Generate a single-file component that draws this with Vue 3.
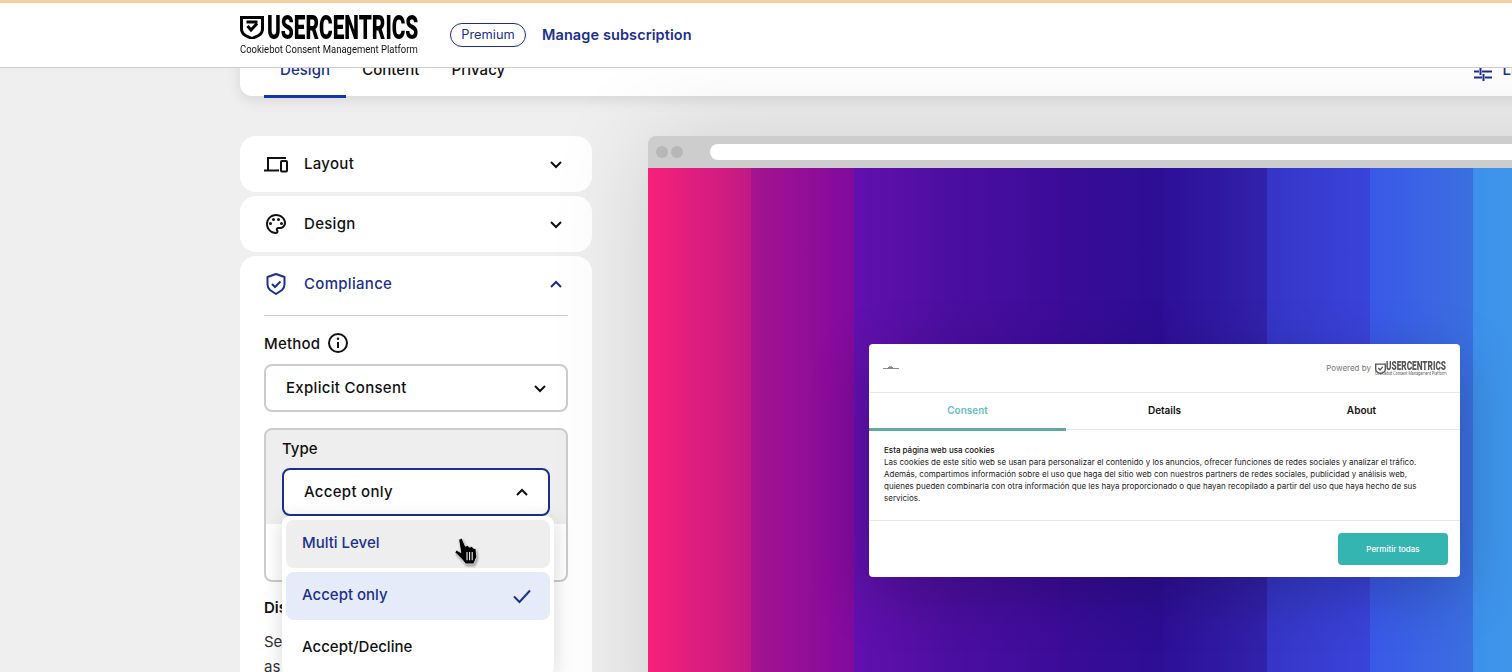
<script setup>
const stripes = [
  ['#f8207a', '#c01a84'],
  ['#a5138f', '#800a9e'],
  ['#6210ae', '#4a0e9f'],
  ['#4a0ea0', '#3c0c99'],
  ['#3a0c98', '#2c0e94'],
  ['#2e0f98', '#3122ab'],
  ['#3535c6', '#3a44da'],
  ['#3a58e8', '#3a70e0'],
  ['#3d90ea', '#40a0ea'],
  ['#40a0ea', '#40a8ea']
]
const bodyLines = [
  'Las cookies de este sitio web se usan para personalizar el contenido y los anuncios, ofrecer funciones de redes sociales y analizar el tráfico.',
  'Además, compartimos información sobre el uso que haga del sitio web con nuestros partners de redes sociales, publicidad y análisis web,',
  'quienes pueden combinarla con otra información que les haya proporcionado o que hayan recopilado a partir del uso que haya hecho de sus',
  'servicios.'
]
</script>

<template>
  <div class="page">
    <header class="topbar">
      <div class="brand">
        <svg class="shield" viewBox="0 0 24 24" width="24" height="24">
          <path d="M1.500 2.500h21v11.500q0 4-4 6.500l-6.500 3-6.500-3q-4-2.500-4-6.500z" fill="none" stroke="#000" stroke-width="3" />
          <path d="M6.500 5.500h11v3h-11z" fill="#000" />
          <path d="M7.500 11l3.500 4 6-6.500" fill="none" stroke="#000" stroke-width="3" />
        </svg>
        <div class="brand-texts">
          <div class="brand-name"><span>USERCENTRICS</span></div>
          <div class="brand-sub"><span>Cookiebot Consent Management Platform</span></div>
        </div>
      </div>
      <span class="pill">Premium</span>
      <a class="manage">Manage subscription</a>
    </header>

    <div class="content">
      <nav class="tabs-card">
        <span class="tab active">Design</span>
        <span class="tab">Content</span>
        <span class="tab">Privacy</span>
        <div class="tabs-right">
          <svg width="18" height="14" viewBox="0 0 18 14">
            <path d="M0 4.500h5M8 4.500h10M0 10.500h8M11 10.500h7M6.500 1v7M9.500 7v7" stroke="#1c2f8f" stroke-width="2" fill="none" />
          </svg>
          <span class="live">Live</span>
        </div>
      </nav>

      <main class="main">
        <aside class="side">
          <section class="card">
            <div class="acc-head">
              <svg class="ic" viewBox="0 0 24 24" width="24" height="24">
                <path d="M4 18V6h18M0 18.500h15" fill="none" stroke="#111" stroke-width="2" />
                <rect x="17" y="9" width="6" height="10.500" rx="1" fill="none" stroke="#111" stroke-width="2" />
              </svg>
              <span class="acc-title">Layout</span>
              <svg class="chev" viewBox="0 0 24 24" width="24" height="24"><path d="M7 10l5 5 5-5" fill="none" stroke="#111" stroke-width="2" /></svg>
            </div>
          </section>

          <section class="card">
            <div class="acc-head">
              <svg class="ic" viewBox="0 0 24 24" width="24" height="24">
                <path fill="#111" d="M12 22C6.490 22 2 17.510 2 12S6.490 2 12 2s10 4.040 10 9c0 3.310-2.690 6-6 6h-1.770c-.28 0-.5.22-.5.5 0 .12.05.23.13.33.41.47.64 1.060.64 1.670 0 1.380-1.120 2.500-2.500 2.500zm0-18c-4.410 0-8 3.590-8 8s3.590 8 8 8c.28 0 .5-.22.5-.5 0-.16-.08-.28-.14-.35-.41-.46-.63-1.050-.63-1.650 0-1.380 1.120-2.500 2.500-2.500H16c2.210 0 4-1.790 4-4 0-3.860-3.590-7-8-7z" />
                <circle cx="6.500" cy="11.500" r="1.500" fill="#111" />
                <circle cx="9.500" cy="7.500" r="1.500" fill="#111" />
                <circle cx="14.500" cy="7.500" r="1.500" fill="#111" />
                <circle cx="17.500" cy="11.500" r="1.500" fill="#111" />
              </svg>
              <span class="acc-title">Design</span>
              <svg class="chev" viewBox="0 0 24 24" width="24" height="24"><path d="M7 10l5 5 5-5" fill="none" stroke="#111" stroke-width="2" /></svg>
            </div>
          </section>

          <section class="card grow">
            <div class="acc-head navy">
              <svg class="ic" viewBox="0 0 24 24" width="24" height="24">
                <path d="M12 2l8.500 3v7.500q0 3-2.500 5.500l-6 4-6-4q-2.500-2.500-2.500-5.500V5z" fill="none" stroke="#1c2f8f" stroke-width="2" stroke-linejoin="round" />
                <path d="M8 12l3 3 5.500-5.500" fill="none" stroke="#1c2f8f" stroke-width="2" />
              </svg>
              <span class="acc-title">Compliance</span>
              <svg class="chev" viewBox="0 0 24 24" width="24" height="24"><path d="M7 15l5-5 5 5" fill="none" stroke="#1c2f8f" stroke-width="2" /></svg>
            </div>

            <div class="acc-body">
              <div class="method-label">
                <span>Method</span>
                <svg viewBox="0 0 22 22" width="22" height="22">
                  <circle cx="11" cy="11" r="9" fill="none" stroke="#111" stroke-width="2" />
                  <path d="M11 10v6" stroke="#111" stroke-width="2" />
                  <circle cx="11" cy="6.800" r="1.200" fill="#111" />
                </svg>
              </div>
              <div class="select">
                <span>Explicit Consent</span>
                <svg viewBox="0 0 24 24" width="24" height="24"><path d="M7 10l5 5 5-5" fill="none" stroke="#111" stroke-width="2" /></svg>
              </div>

              <div class="type-box">
                <div class="type-label">Type</div>
                <div class="select open">
                  <span>Accept only</span>
                  <svg viewBox="0 0 24 24" width="24" height="24"><path d="M7 15l5-5 5 5" fill="none" stroke="#111" stroke-width="2" /></svg>
                </div>
                <div class="menu">
                  <div class="opt hover"><span>Multi Level</span></div>
                  <div class="opt sel">
                    <span>Accept only</span>
                    <svg viewBox="0 0 24 24" width="24" height="24"><path d="M4 12.500l5.500 5.500L20 6.500" fill="none" stroke="#1c2f8f" stroke-width="2" /></svg>
                  </div>
                  <div class="opt"><span>Accept/Decline</span></div>
                </div>
                <svg class="cursor" viewBox="0 0 24 28" width="25" height="29">
                  <path d="M4.500 2.500L7.500 1l3.500 8 2-1 2 2 2-1 2 2 2 0 1 8-3 7h-8l-3-4-7-7 1-2.500 4.500 2.500z" fill="#000" stroke="#fff" stroke-width=".7" />
                  <path d="M12.500 14.500v8M15 14.500v8M17.500 14.500v8" stroke="#fff" stroke-width="1" />
                </svg>
              </div>

              <div class="dis">Display</div>
              <p class="desc">Select<br />as</p>
            </div>
          </section>
        </aside>

        <section class="preview">
          <div class="chrome">
            <i class="dot"></i>
            <i class="dot"></i>
            <div class="url"></div>
          </div>
          <div class="stage">
            <div v-for="(s, i) in stripes" :key="i" class="stripe" :style="{ background: `linear-gradient(90deg, ${s[0]}, ${s[1]})` }"></div>

            <div class="modal">
              <div class="m-head">
                <svg width="16" height="4" viewBox="0 0 16 4">
                  <path d="M0 2.500h16M5 1.500h5M6 .8h3" stroke="#8a8a8a" stroke-width="1" />
                </svg>
                <div class="m-powered">
                  <span class="m-by">Powered by</span>
                  <svg viewBox="0 0 24 24" width="11" height="11">
                    <path d="M1.500 2.500h21v11.500q0 4-4 6.500l-6.500 3-6.500-3q-4-2.500-4-6.500z" fill="none" stroke="#555" stroke-width="3" />
                    <path d="M7.500 11l3.500 4 6-6.500" fill="none" stroke="#555" stroke-width="3" />
                  </svg>
                  <div class="m-logo">
                    <div class="m-name"><span>USERCENTRICS</span></div>
                    <div class="m-sub"><span>Cookiebot Consent Management Platform</span></div>
                  </div>
                </div>
              </div>
              <div class="m-tabs">
                <span class="m-tab on">Consent</span>
                <span class="m-tab">Details</span>
                <span class="m-tab">About</span>
              </div>
              <div class="m-body">
                <div class="m-title">Esta página web usa cookies</div>
                <div v-for="l in bodyLines" :key="l">{{ l }}</div>
              </div>
              <div class="m-foot">
                <button class="m-btn">Permitir todas</button>
              </div>
            </div>
          </div>
        </section>
      </main>
    </div>
  </div>
</template>

<style scoped>
.page {
  position: relative;
  height: 672px;
  overflow: hidden;
  background: #efefef;
  font-family: Inter, "Liberation Sans", sans-serif;
  color: #111;
}
.topbar {
  position: absolute;
  top: 0;
  left: 0;
  right: 0;
  height: 68px;
  box-sizing: border-box;
  z-index: 10;
  background: #fff;
  border-top: 3px solid #f7cf9f;
  border-bottom: 1px solid #ccc;
  padding-left: 240px;
  display: flex;
  align-items: center;
}
.brand {
  width: 179px;
  position: relative;
  height: 40px;
  margin-top: -3px;
  display: flex;
  flex: none;
}
.shield {
  flex: none;
  margin-top: 1px;
}
.brand-texts {
  position: absolute;
  inset: 0;
}
.brand-name {
  margin-left: 27px;
  height: 26px;
  font: 900 34px/27px Roboto, sans-serif;
  color: #000;
  white-space: nowrap;
}
.brand-name span {
  display: inline-block;
  transform-origin: 0 50%;
  transform: scaleX(0.612);
}
.brand-sub {
  margin-top: 4px;
  font: 400 11px/12px Roboto, sans-serif;
  color: #111;
  white-space: nowrap;
}
.brand-sub span {
  display: inline-block;
  transform-origin: 0 50%;
  transform: scaleX(0.862);
}
.pill {
  margin-left: 31px;
  height: 24px;
  box-sizing: border-box;
  width: 76px;
  border: 1.5px solid #1c2f8f;
  border-radius: 12px;
  color: #1c2f8f;
  font-size: 12.800px;
  line-height: 21px;
  text-align: center;
}
.manage {
  margin-left: 16px;
  margin-top: -2px;
  color: #1c2f8f;
  font-size: 14.500px;
  font-weight: 600;
  letter-spacing: 0.1px;
}
.content {
  padding-left: 240px;
}
.tabs-card {
  margin-top: 36px;
  width: 1300px;
  height: 60px;
  background: #fff;
  border-radius: 0 0 12px 12px;
  box-shadow: 0 4px 14px rgba(0, 0, 0, 0.1);
  padding-left: 24px;
  display: flex;
  box-sizing: border-box;
}
.tab {
  height: 62px;
  box-sizing: border-box;
  padding: 25px 16px 0;
  font-size: 15px;
  font-weight: 500;
  line-height: 18px;
  letter-spacing: 0.05px;
  border-bottom: 3px solid transparent;
}
.tab.active {
  color: #1c2f8f;
  border-bottom-color: #1433b0;
}
.tabs-right {
  margin-left: auto;
  padding: 31px 8px 0 0;
  display: flex;
  gap: 11px;
  color: #1c2f8f;
  font-size: 15px;
  font-weight: 500;
}
.live {
  margin-top: -7px;
}
.main {
  margin-top: 40px;
  display: flex;
  gap: 56px;
  align-items: flex-start;
}
.side {
  width: 352px;
  flex: none;
  display: flex;
  flex-direction: column;
  gap: 4px;
}
.card {
  background: #fff;
  border-radius: 16px;
}
.card.grow {
  height: 600px;
}
.acc-head {
  height: 56px;
  padding: 0 24px;
  display: flex;
  align-items: center;
  gap: 16px;
}
.acc-head.navy {
  color: #1c2f8f;
}
.acc-title {
  flex: 1;
  margin-top: -2px;
  font-size: 15px;
  font-weight: 500;
  letter-spacing: 0.3px;
}
.acc-body {
  margin: 3px 24px 0;
  border-top: 1px solid #ccc;
  padding-top: 16px;
}
.method-label {
  display: flex;
  align-items: center;
  gap: 7px;
  height: 22px;
  font-size: 15px;
  font-weight: 500;
  letter-spacing: 0.2px;
}
.select {
  margin-top: 10px;
  height: 48px;
  box-sizing: border-box;
  background: #fff;
  border: 2px solid #ccc;
  border-radius: 8px;
  padding: 0 14px 0 20px;
  display: flex;
  align-items: center;
  justify-content: space-between;
  font-size: 15px;
  font-weight: 500;
  letter-spacing: 0.3px;
}
.select span {
  margin-top: -2px;
}
.type-box {
  position: relative;
  margin-top: 16px;
  height: 154px;
  box-sizing: border-box;
  border: 2px solid #ccc;
  border-radius: 8px;
  padding: 0 16px;
  background: linear-gradient(#eee 0, #eee 94px, #fff 94px);
}
.type-label {
  margin-top: 9px;
  font-size: 15px;
  font-weight: 500;
  line-height: 20px;
}
.select.open {
  margin-top: 9px;
  border-color: #1c2f8f;
}
.menu {
  position: absolute;
  left: 16px;
  top: 86px;
  width: 272px;
  box-sizing: border-box;
  z-index: 5;
  background: #fff;
  border-radius: 8px;
  padding: 4px;
  display: flex;
  flex-direction: column;
  gap: 4px;
  box-shadow: 0 4px 20px rgba(0, 0, 0, 0.16);
}
.opt {
  height: 48px;
  box-sizing: border-box;
  border-radius: 8px;
  padding: 0 16px;
  display: flex;
  align-items: center;
  justify-content: space-between;
  font-size: 15px;
  font-weight: 500;
}
.opt span {
  margin-top: -4px;
}
.opt.hover {
  background: #eee;
  color: #1c2f8f;
}
.opt.sel {
  background: #e6ebfa;
  color: #1c2f8f;
}
.cursor {
  position: absolute;
  left: 188px;
  top: 107px;
  z-index: 6;
  filter: drop-shadow(1px 2px 1px rgba(0, 0, 0, 0.35));
}
.dis {
  margin-top: 16px;
  font-size: 15px;
  font-weight: 600;
  line-height: 20px;
}
.desc {
  margin: 11px 0 0;
  font-size: 15px;
  line-height: 25px;
  color: #333;
}
.preview {
  position: relative;
  z-index: 1;
  flex: none;
  width: 1033px;
  height: 640px;
  border-radius: 8px 8px 0 0;
  box-shadow: 0 0 100px rgba(0, 0, 0, 0.13);
}
.chrome {
  height: 32px;
  background: #cdcdcd;
  border-radius: 8px 8px 0 0;
  display: flex;
  align-items: center;
  padding-left: 8px;
  gap: 3px;
}
.dot {
  width: 12px;
  height: 12px;
  border-radius: 50%;
  background: #b7b7b7;
}
.url {
  margin-left: 24px;
  flex: 1;
  height: 16px;
  background: #fff;
  border-radius: 8px 0 0 8px;
}
.stage {
  position: relative;
  height: 608px;
  display: flex;
  overflow: hidden;
  box-shadow: inset 0 1px 2px rgba(0, 0, 0, 0.3);
}
.stripe {
  width: 103.100px;
  flex: none;
}
.modal {
  position: absolute;
  left: 221px;
  top: 176px;
  width: 591px;
  height: 233px;
  background: #fff;
  border-radius: 4px;
  box-shadow: 0 16px 60px rgba(0, 0, 0, 0.22);
  display: flex;
  flex-direction: column;
}
.m-head {
  height: 48px;
  flex: none;
  padding: 0 14px;
  display: flex;
  align-items: center;
  justify-content: space-between;
  border-bottom: 1px solid #e8e8e8;
}
.m-powered {
  display: flex;
  align-items: center;
}
.m-by {
  font-size: 8px;
  color: #777;
  margin-right: 4px;
}
.m-logo {
  width: 60px;
  margin-top: 1px;
}
.m-name {
  height: 10px;
  font: 900 12.500px/10px Roboto, sans-serif;
  color: #555;
  white-space: nowrap;
}
.m-name span {
  display: inline-block;
  transform-origin: 0 50%;
  transform: scaleX(0.66);
}
.m-sub {
  height: 5px;
  font: 400 4.500px/5px Roboto, sans-serif;
  color: #666;
  white-space: nowrap;
  margin-left: -11px;
}
.m-sub span {
  display: inline-block;
  transform-origin: 0 50%;
  transform: scaleX(0.85);
}
.m-tabs {
  height: 36px;
  flex: none;
  display: flex;
  border-bottom: 1px solid #e8e8e8;
}
.m-tab {
  flex: 1;
  height: 38px;
  box-sizing: border-box;
  padding-top: 10px;
  text-align: center;
  font-size: 10px;
  line-height: 14px;
  font-weight: 600;
  color: #111;
}
.m-tab.on {
  color: #64bfbd;
  border-bottom: 3px solid #5fa8a8;
}
.m-body {
  flex: 1;
  padding: 14px 15px 0;
  font-size: 8px;
  line-height: 12px;
  color: #222;
  white-space: nowrap;
}
.m-title {
  font-weight: 500;
  color: #111;
}
.m-foot {
  height: 57px;
  flex: none;
  box-sizing: border-box;
  border-top: 1px solid #e8e8e8;
  padding: 12px 12px 0 0;
  display: flex;
  justify-content: flex-end;
}
.m-btn {
  width: 110px;
  height: 32px;
  border: 0;
  border-radius: 4px;
  background: #35b5b2;
  color: #fff;
  font-family: inherit;
  font-size: 8px;
  font-weight: 500;
}
</style>
